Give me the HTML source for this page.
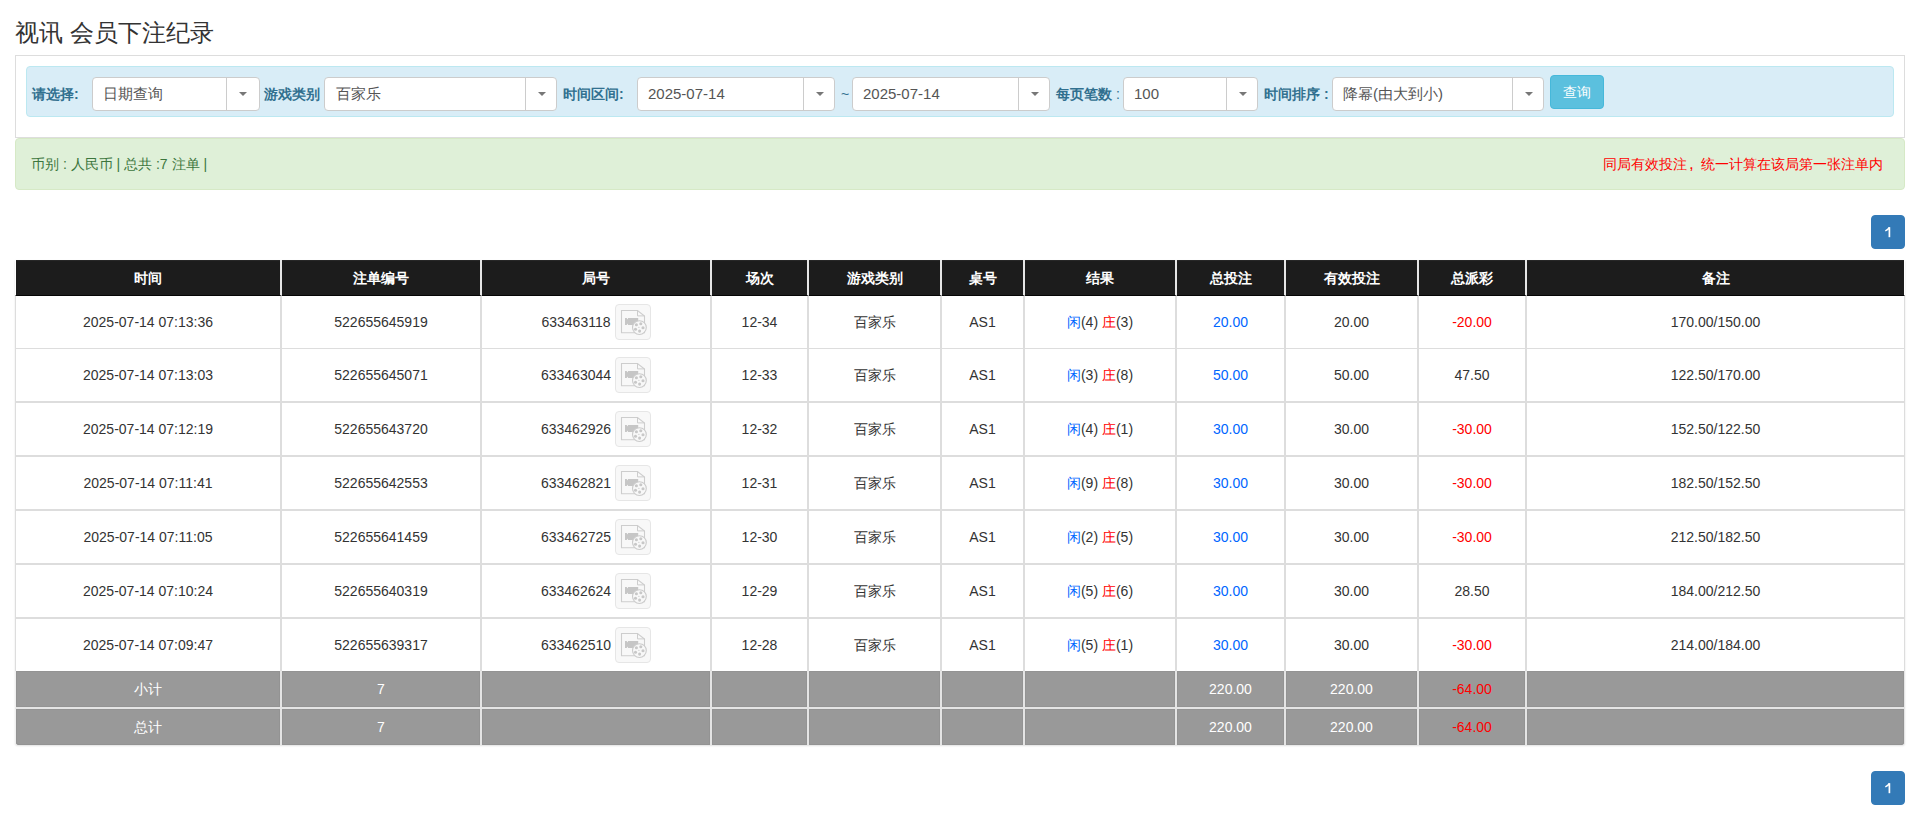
<!DOCTYPE html>
<html><head><meta charset="utf-8">
<style>
*{box-sizing:border-box;margin:0;padding:0}
html,body{width:1915px;height:827px;overflow:hidden;background:#fff}
body{font-family:"Liberation Sans",sans-serif;font-size:14px;color:#333;position:relative;line-height:20px}
.abs{position:absolute}
.title{left:15px;top:18px;font-size:24px;line-height:30px;color:#333;white-space:nowrap}
.panel{left:15px;top:55px;width:1890px;height:83px;border:1px solid #ddd}
.bar{left:26px;top:66px;width:1868px;height:51px;background:#d9edf7;border:1px solid #bce8f1;border-radius:4px}
.lbl{position:absolute;top:84px;font-weight:bold;color:#31708f;white-space:nowrap;line-height:20px}
.sel{position:absolute;top:77px;height:34px;background:#fff;border:1px solid #ccc;border-radius:4px}
.sel .t{position:absolute;left:12px;top:6px;line-height:20px;color:#555;white-space:nowrap;font-size:15px}
.sel .sep{position:absolute;top:0;bottom:0;width:1px;background:#ccc}
.sel .car{position:absolute;top:14px;width:0;height:0;border-left:4px solid transparent;border-right:4px solid transparent;border-top:4px solid #777}
.btn{left:1550px;top:75px;width:54px;height:34px;background:#5bc0de;border:1px solid #46b8da;border-radius:4px;color:#fff;text-align:center;line-height:32px}
.alert{left:15px;top:138px;width:1890px;height:52px;background:#dff0d8;border:1px solid #d6e9c6;border-radius:4px}
.a1{left:31px;top:154px;color:#3c763d;white-space:nowrap}
.a2{right:32px;top:154px;color:#f00;font-size:14px;white-space:nowrap}
.pg{left:1871px;width:34px;height:34px;background:#337ab7;border:1px solid #337ab7;border-radius:4px;color:#fff;text-align:center;line-height:32px}
table{position:absolute;left:15px;top:260px;width:1890px;border-collapse:separate;border-spacing:0;table-layout:fixed;box-shadow:0 1px 2px rgba(0,0,0,.12);border-radius:0 0 3px 3px}
th{background:#1c1c1c;color:#fff;font-weight:bold;height:36px;padding:0;border-right:2px solid #e6e6e6;border-bottom:1px solid #050505;text-align:center;box-shadow:inset 0 2px 1px -1px #2a2a2a}
th:first-child{border-left:1px solid #fff}
th:last-child{border-right:1px solid #fff}
td{padding:0;border-right:2px solid #ddd;border-bottom:2px solid #ddd;text-align:center;height:54px;white-space:nowrap;vertical-align:middle}
td:first-child{border-left:1px solid #ddd}
td:last-child{border-right:1px solid #ddd}
tbody tr:first-child td{border-bottom-width:1px;height:53px}
tbody tr.last td{border-bottom:0;height:52px}
tr.sum td{background:#999 padding-box;color:#fff;height:36px;border-bottom:0;border-right-color:#e4e4e4;box-shadow:inset 0 0 0 1px #939393}
tr.sum td:first-child{border-left:1px solid rgba(0,0,0,.06)}
tr.sum td:last-child{border-right:1px solid rgba(0,0,0,.1)}
tr.sum1 td{height:38px;border-bottom:2px solid #e4e4e4}
tr.sum2 td:first-child{border-bottom-left-radius:3px}
tr.sum2 td:last-child{border-bottom-right-radius:3px}
.b{color:#0066ff}.r,tr.sum td.r{color:#f00}
.vm{vertical-align:middle}.ib{display:inline-block;vertical-align:middle;width:36px;height:36px;border:1px solid #e6e6e6;border-radius:4px;background:#f8f8f8;margin-left:4px;position:relative}
.ib svg{position:absolute;left:-1px;top:-1px}
</style></head><body>
<div class="abs title">视讯 会员下注纪录</div>
<div class="abs panel"></div>
<div class="abs bar"></div>
<div class="lbl" style="left:32px">请选择:</div>
<div class="sel" style="left:92px;width:168px"><span class="t" style="left:10px">日期查询</span><span class="sep" style="left:133px"></span><span class="car" style="left:146px"></span></div>
<div class="lbl" style="left:264px">游戏类别</div>
<div class="sel" style="left:324px;width:233px"><span class="t" style="left:11px">百家乐</span><span class="sep" style="left:200px"></span><span class="car" style="left:213px"></span></div>
<div class="lbl" style="left:563px">时间区间:</div>
<div class="sel" style="left:637px;width:198px"><span class="t" style="left:10px">2025-07-14</span><span class="sep" style="left:165px"></span><span class="car" style="left:178px"></span></div>
<div class="lbl" style="left:841px;font-weight:normal">~</div>
<div class="sel" style="left:852px;width:198px"><span class="t" style="left:10px">2025-07-14</span><span class="sep" style="left:165px"></span><span class="car" style="left:178px"></span></div>
<div class="lbl" style="left:1056px">每页笔数 <span style="font-weight:normal">:</span></div>
<div class="sel" style="left:1123px;width:135px"><span class="t" style="left:10px">100</span><span class="sep" style="left:102px"></span><span class="car" style="left:115px"></span></div>
<div class="lbl" style="left:1264px">时间排序 :</div>
<div class="sel" style="left:1332px;width:212px"><span class="t" style="left:10px">降幂(由大到小)</span><span class="sep" style="left:179px"></span><span class="car" style="left:192px"></span></div>
<div class="abs btn">查询</div>
<div class="abs alert"></div>
<div class="abs a1">币别 : 人民币 | 总共 :7 注单 |</div>
<div class="abs a2">同局有效投注<span style="display:inline-block;width:14px;text-align:left;padding-left:2px;font-size:17px;line-height:14px">,</span>统一计算在该局第一张注单内</div>
<div class="abs pg" style="top:215px"><svg width="34" height="34" style="position:absolute;left:-1px;top:-1px"><path d="M18.4 12.2V22.2" stroke="#fff" stroke-width="1.7" fill="none"/><path d="M18.4 12.4C17.6 14 16.2 15.2 14.3 15.9" stroke="#fff" stroke-width="1.5" fill="none"/></svg></div>
<div class="abs pg" style="top:771px"><svg width="34" height="34" style="position:absolute;left:-1px;top:-1px"><path d="M18.4 12.2V22.2" stroke="#fff" stroke-width="1.7" fill="none"/><path d="M18.4 12.4C17.6 14 16.2 15.2 14.3 15.9" stroke="#fff" stroke-width="1.5" fill="none"/></svg></div>
<table>
<colgroup><col style="width:267px"><col style="width:200px"><col style="width:230px"><col style="width:97px"><col style="width:133px"><col style="width:83px"><col style="width:152px"><col style="width:109px"><col style="width:133px"><col style="width:108px"><col></colgroup>
<thead><tr><th>时间</th><th>注单编号</th><th>局号</th><th>场次</th><th>游戏类别</th><th>桌号</th><th>结果</th><th>总投注</th><th>有效投注</th><th>总派彩</th><th>备注</th></tr></thead>
<tbody id="tb">
<tr><td>2025-07-14 07:13:36</td><td>522655645919</td><td><span class="vm">633463118</span><span class="ib"><svg width="36" height="36" viewBox="0 0 36 36"><path d="M6.5 6.5H22.5L29.5 12V28.7H6.5Z" fill="none" stroke="#cdcdcd" stroke-width="1.1"/><path d="M22.5 6.5V11.9H29.5" fill="none" stroke="#cdcdcd" stroke-width="1"/><path d="M10 14H11.6L13 15.4V14H23.2V21H13V19.6L11.6 21H10Z" fill="#c6c6c6"/><circle cx="24.4" cy="23.6" r="6.9" fill="#f8f8f8" stroke="#cbcbcb" stroke-width="1.1"/><g fill="#c8c8c8"><circle cx="21.4" cy="20.7" r="1.55"/><circle cx="25.8" cy="19.8" r="1.55"/><circle cx="28" cy="23.7" r="1.55"/><circle cx="24.6" cy="27.1" r="1.55"/><circle cx="20.5" cy="25.3" r="1.55"/><circle cx="23.9" cy="23.3" r=".6"/></g></svg></span></td><td>12-34</td><td>百家乐</td><td>AS1</td><td><span class="b">闲</span>(4) <span class="r">庄</span>(3)</td><td class="b">20.00</td><td>20.00</td><td class="r">-20.00</td><td>170.00/150.00</td></tr>
<tr><td>2025-07-14 07:13:03</td><td>522655645071</td><td><span class="vm">633463044</span><span class="ib"><svg width="36" height="36" viewBox="0 0 36 36"><path d="M6.5 6.5H22.5L29.5 12V28.7H6.5Z" fill="none" stroke="#cdcdcd" stroke-width="1.1"/><path d="M22.5 6.5V11.9H29.5" fill="none" stroke="#cdcdcd" stroke-width="1"/><path d="M10 14H11.6L13 15.4V14H23.2V21H13V19.6L11.6 21H10Z" fill="#c6c6c6"/><circle cx="24.4" cy="23.6" r="6.9" fill="#f8f8f8" stroke="#cbcbcb" stroke-width="1.1"/><g fill="#c8c8c8"><circle cx="21.4" cy="20.7" r="1.55"/><circle cx="25.8" cy="19.8" r="1.55"/><circle cx="28" cy="23.7" r="1.55"/><circle cx="24.6" cy="27.1" r="1.55"/><circle cx="20.5" cy="25.3" r="1.55"/><circle cx="23.9" cy="23.3" r=".6"/></g></svg></span></td><td>12-33</td><td>百家乐</td><td>AS1</td><td><span class="b">闲</span>(3) <span class="r">庄</span>(8)</td><td class="b">50.00</td><td>50.00</td><td>47.50</td><td>122.50/170.00</td></tr>
<tr><td>2025-07-14 07:12:19</td><td>522655643720</td><td><span class="vm">633462926</span><span class="ib"><svg width="36" height="36" viewBox="0 0 36 36"><path d="M6.5 6.5H22.5L29.5 12V28.7H6.5Z" fill="none" stroke="#cdcdcd" stroke-width="1.1"/><path d="M22.5 6.5V11.9H29.5" fill="none" stroke="#cdcdcd" stroke-width="1"/><path d="M10 14H11.6L13 15.4V14H23.2V21H13V19.6L11.6 21H10Z" fill="#c6c6c6"/><circle cx="24.4" cy="23.6" r="6.9" fill="#f8f8f8" stroke="#cbcbcb" stroke-width="1.1"/><g fill="#c8c8c8"><circle cx="21.4" cy="20.7" r="1.55"/><circle cx="25.8" cy="19.8" r="1.55"/><circle cx="28" cy="23.7" r="1.55"/><circle cx="24.6" cy="27.1" r="1.55"/><circle cx="20.5" cy="25.3" r="1.55"/><circle cx="23.9" cy="23.3" r=".6"/></g></svg></span></td><td>12-32</td><td>百家乐</td><td>AS1</td><td><span class="b">闲</span>(4) <span class="r">庄</span>(1)</td><td class="b">30.00</td><td>30.00</td><td class="r">-30.00</td><td>152.50/122.50</td></tr>
<tr><td>2025-07-14 07:11:41</td><td>522655642553</td><td><span class="vm">633462821</span><span class="ib"><svg width="36" height="36" viewBox="0 0 36 36"><path d="M6.5 6.5H22.5L29.5 12V28.7H6.5Z" fill="none" stroke="#cdcdcd" stroke-width="1.1"/><path d="M22.5 6.5V11.9H29.5" fill="none" stroke="#cdcdcd" stroke-width="1"/><path d="M10 14H11.6L13 15.4V14H23.2V21H13V19.6L11.6 21H10Z" fill="#c6c6c6"/><circle cx="24.4" cy="23.6" r="6.9" fill="#f8f8f8" stroke="#cbcbcb" stroke-width="1.1"/><g fill="#c8c8c8"><circle cx="21.4" cy="20.7" r="1.55"/><circle cx="25.8" cy="19.8" r="1.55"/><circle cx="28" cy="23.7" r="1.55"/><circle cx="24.6" cy="27.1" r="1.55"/><circle cx="20.5" cy="25.3" r="1.55"/><circle cx="23.9" cy="23.3" r=".6"/></g></svg></span></td><td>12-31</td><td>百家乐</td><td>AS1</td><td><span class="b">闲</span>(9) <span class="r">庄</span>(8)</td><td class="b">30.00</td><td>30.00</td><td class="r">-30.00</td><td>182.50/152.50</td></tr>
<tr><td>2025-07-14 07:11:05</td><td>522655641459</td><td><span class="vm">633462725</span><span class="ib"><svg width="36" height="36" viewBox="0 0 36 36"><path d="M6.5 6.5H22.5L29.5 12V28.7H6.5Z" fill="none" stroke="#cdcdcd" stroke-width="1.1"/><path d="M22.5 6.5V11.9H29.5" fill="none" stroke="#cdcdcd" stroke-width="1"/><path d="M10 14H11.6L13 15.4V14H23.2V21H13V19.6L11.6 21H10Z" fill="#c6c6c6"/><circle cx="24.4" cy="23.6" r="6.9" fill="#f8f8f8" stroke="#cbcbcb" stroke-width="1.1"/><g fill="#c8c8c8"><circle cx="21.4" cy="20.7" r="1.55"/><circle cx="25.8" cy="19.8" r="1.55"/><circle cx="28" cy="23.7" r="1.55"/><circle cx="24.6" cy="27.1" r="1.55"/><circle cx="20.5" cy="25.3" r="1.55"/><circle cx="23.9" cy="23.3" r=".6"/></g></svg></span></td><td>12-30</td><td>百家乐</td><td>AS1</td><td><span class="b">闲</span>(2) <span class="r">庄</span>(5)</td><td class="b">30.00</td><td>30.00</td><td class="r">-30.00</td><td>212.50/182.50</td></tr>
<tr><td>2025-07-14 07:10:24</td><td>522655640319</td><td><span class="vm">633462624</span><span class="ib"><svg width="36" height="36" viewBox="0 0 36 36"><path d="M6.5 6.5H22.5L29.5 12V28.7H6.5Z" fill="none" stroke="#cdcdcd" stroke-width="1.1"/><path d="M22.5 6.5V11.9H29.5" fill="none" stroke="#cdcdcd" stroke-width="1"/><path d="M10 14H11.6L13 15.4V14H23.2V21H13V19.6L11.6 21H10Z" fill="#c6c6c6"/><circle cx="24.4" cy="23.6" r="6.9" fill="#f8f8f8" stroke="#cbcbcb" stroke-width="1.1"/><g fill="#c8c8c8"><circle cx="21.4" cy="20.7" r="1.55"/><circle cx="25.8" cy="19.8" r="1.55"/><circle cx="28" cy="23.7" r="1.55"/><circle cx="24.6" cy="27.1" r="1.55"/><circle cx="20.5" cy="25.3" r="1.55"/><circle cx="23.9" cy="23.3" r=".6"/></g></svg></span></td><td>12-29</td><td>百家乐</td><td>AS1</td><td><span class="b">闲</span>(5) <span class="r">庄</span>(6)</td><td class="b">30.00</td><td>30.00</td><td>28.50</td><td>184.00/212.50</td></tr>
<tr class="last"><td>2025-07-14 07:09:47</td><td>522655639317</td><td><span class="vm">633462510</span><span class="ib"><svg width="36" height="36" viewBox="0 0 36 36"><path d="M6.5 6.5H22.5L29.5 12V28.7H6.5Z" fill="none" stroke="#cdcdcd" stroke-width="1.1"/><path d="M22.5 6.5V11.9H29.5" fill="none" stroke="#cdcdcd" stroke-width="1"/><path d="M10 14H11.6L13 15.4V14H23.2V21H13V19.6L11.6 21H10Z" fill="#c6c6c6"/><circle cx="24.4" cy="23.6" r="6.9" fill="#f8f8f8" stroke="#cbcbcb" stroke-width="1.1"/><g fill="#c8c8c8"><circle cx="21.4" cy="20.7" r="1.55"/><circle cx="25.8" cy="19.8" r="1.55"/><circle cx="28" cy="23.7" r="1.55"/><circle cx="24.6" cy="27.1" r="1.55"/><circle cx="20.5" cy="25.3" r="1.55"/><circle cx="23.9" cy="23.3" r=".6"/></g></svg></span></td><td>12-28</td><td>百家乐</td><td>AS1</td><td><span class="b">闲</span>(5) <span class="r">庄</span>(1)</td><td class="b">30.00</td><td>30.00</td><td class="r">-30.00</td><td>214.00/184.00</td></tr>
<tr class="sum sum1"><td>小计</td><td>7</td><td></td><td></td><td></td><td></td><td></td><td>220.00</td><td>220.00</td><td class="r">-64.00</td><td></td></tr>
<tr class="sum sum2"><td>总计</td><td>7</td><td></td><td></td><td></td><td></td><td></td><td>220.00</td><td>220.00</td><td class="r">-64.00</td><td></td></tr>
</tbody></table>
</body></html>
